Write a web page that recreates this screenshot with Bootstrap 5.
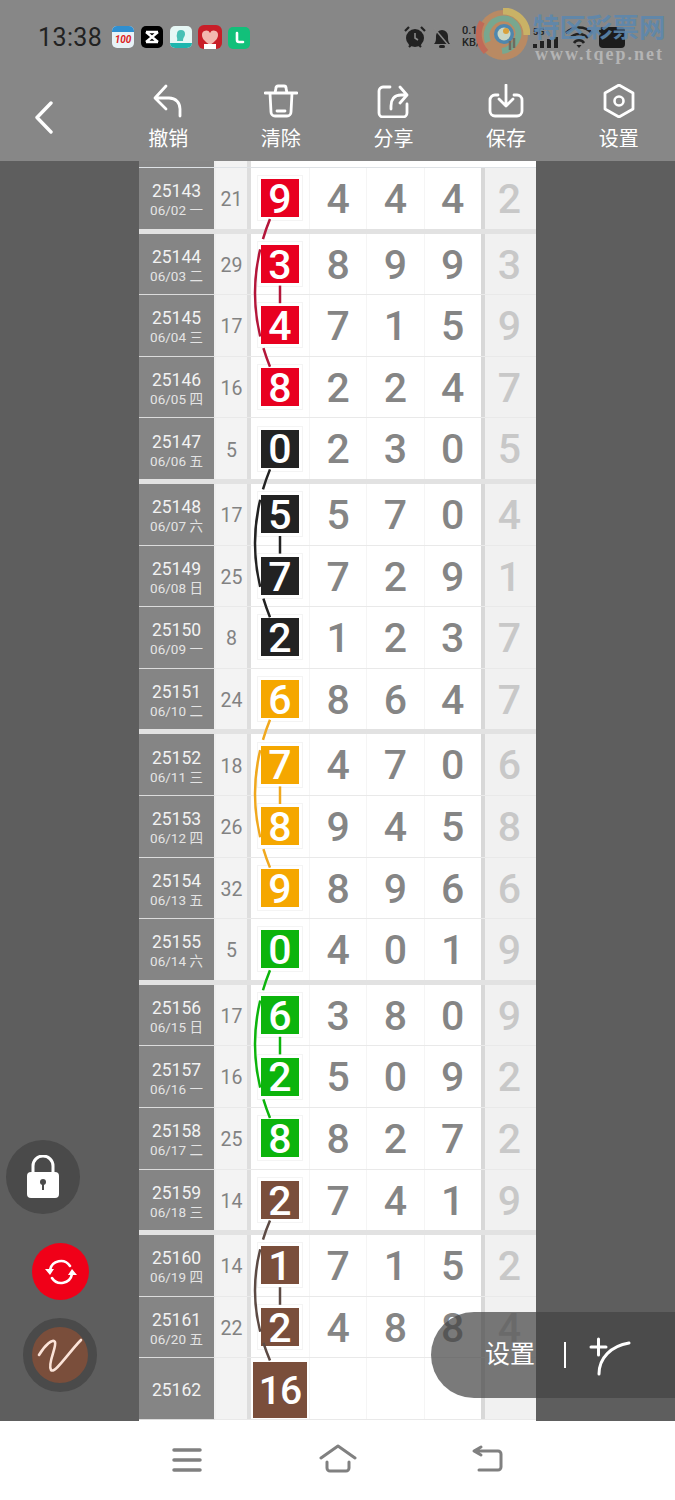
<!DOCTYPE html>
<html lang="zh-CN">
<head>
    <meta charset="UTF-8">
    <meta name="viewport" content="width=device-width, initial-scale=1.0">
    <title>走势图</title>
    <link href="https://cdn.jsdelivr.net/npm/bootstrap@5.3.0/dist/css/bootstrap.min.css" rel="stylesheet">
    <style>
        body {
            width: 675px;
            height: 1500px;
            background-color: #5e5e5e;
            font-family: Roboto, "Noto Sans CJK SC", sans-serif;
        }
        .top-head { height: 161px; background-color: #878787; }
        .status-row { height: 72px; padding: 25px 0 0 38px; }
        .clock { font-size: 25px; line-height: 26px; color: #222; width: 74px; letter-spacing: .4px; }
        .status-right { margin-left: 151px; }
        .speed { font-size: 11px; line-height: 12px; font-weight: 500; color: #222; width: 38px; }
        .tool-back { width: 112px; padding: 29px 0 0 34px; }
        .tool-item { width: 112.75px; color: #fff; font-size: 20px; line-height: 24px; padding-top: 12px; }
        .tool-item svg { margin-bottom: 9px; }

        .chart-wrap { width: 397px; height: 1260px; background-color: #fff; }
        .stub-row { height: 7px; }
        .cell-no { width: 77px; background-color: #858585; color: #f2f2f2; font-size: 17.5px; line-height: 21px; padding-top: 4px; border-right: 2px solid #efefef; }
        .cell-no span { font-size: 13.5px; line-height: 17px; color: #e4e4e4; }
        .cell-sum { width: 35px; background-color: #f3f3f3; color: #828282; font-size: 19.5px; padding-top: 3px; border-right: 4px solid #dedede; }
        .cell-pick { width: 58px; }
        .cell-num { width: 57.3px; color: #858585; font-size: 41px; font-weight: 500; padding-top: 3px; border-left: 1px solid #f5f5f5; }
        .cell-end { width: 55px; background-color: #f1f1f1; color: #c8c8c8; font-size: 41px; font-weight: 500; padding: 3px 2px 0 0; border-left: 4px solid #d8d8d8; }
        .chart-row { height: 61.6px; border-bottom: 1px solid #e9e9e9; }
        .chart-row .cell-no { border-bottom: 1px solid #dcdcdc; margin-bottom: -1px; }
        .chart-row.group-end { height: 65.6px; border-bottom: 5px solid #e2e2e2; }
        .chart-row.group-end .cell-no { border-bottom: 0; margin-bottom: 0; }
        .pick-box {
            position: relative;
            width: 38px;
            height: 38px;
            color: #fff;
            font-size: 41px;
            font-weight: 500;
            padding-top: 3px;
            box-shadow: 0 0 0 3px #fff, 0 0 0 4px #f4f4f4;
        }
        .pick-box.pick-big { width: 54px; height: 56px; box-shadow: none; margin-top: 2px; font-size: 39px; letter-spacing: -1px; padding-top: 4px; }
        .trend-lines { position: absolute; left: 0; top: 0; z-index: 3; }
        .c-red { background-color: #e80020; }
        .c-black { background-color: #222; }
        .c-orange { background-color: #f5a700; }
        .c-green { background-color: #0cb40c; }
        .c-brown { background-color: #7a4e3b; }

        .foot-nav { height: 79px; background-color: #fff; padding-top: 22px; }
        .nav-slot { width: 150.5px; }

        .water-mark { position: absolute; left: 474px; top: 8px; width: 196px; height: 56px; }
        .water-title { position: absolute; left: 59px; top: 3px; color: #5d87ad; font-size: 26.5px; line-height: 34px; font-weight: 700; white-space: nowrap; opacity: .9; }
        .water-url { position: absolute; left: 61px; top: 36px; color: #b4b4b4; font-family: "Liberation Serif", serif; font-size: 18px; line-height: 20px; font-weight: 700; letter-spacing: 2px; white-space: nowrap; }
        .float-lock, .float-sync, .float-pen { position: absolute; border-radius: 50%; }
        .float-lock { left: 6px; top: 1140px; width: 74px; height: 74px; background-color: #4a4a4a; }
        .float-sync { left: 32px; top: 1243px; width: 57px; height: 57px; background-color: #f00018; }
        .float-pen { left: 23px; top: 1318px; width: 74px; height: 74px; background-color: #7a4e3b; border: 9px solid #4a4a4a; }
        .float-setting {
            position: absolute;
            left: 431px;
            top: 1312px;
            width: 244px;
            height: 86px;
            border-radius: 43px 0 0 43px;
            background-color: rgba(68, 68, 68, .71);
            color: #fff;
            font-size: 25px;
            padding-left: 54px;
        }
        .setting-bar { width: 2px; height: 26px; background-color: #fff; margin: 0 23px 0 29px; }
    </style>
</head>
<body class="position-relative overflow-hidden d-flex flex-column">
    <header class="top-head flex-shrink-0">
        <div class="status-row d-flex">
            <div class="clock">13:38</div>
            <svg width="140" height="24" viewBox="0 0 140 24">
                <rect x="0" y="1" width="22" height="22" rx="5" fill="#e8f3f8"/>
                <path d="M0 6a5 5 0 0 1 5-5h12a5 5 0 0 1 5 5v1H0z" fill="#2f8fd0"/>
                <text x="11" y="18" font-size="10" font-weight="700" font-style="italic" fill="#d22" text-anchor="middle">100</text>
                <rect x="29" y="1" width="22" height="22" rx="5" fill="#000"/>
                <path d="M34 7l12 10M46 7L34 17M34 7h12M34 17h12" stroke="#fff" stroke-width="2.4" fill="none"/>
                <rect x="58" y="1" width="22" height="22" rx="5" fill="#e6f7f5"/>
                <path d="M58 18h22v0a5 5 0 0 1-5 5H63a5 5 0 0 1-5-5z" fill="#1db5ad"/>
                <path d="M69 5a4 4 0 0 1 4 4c0 3-2 3-2 7h-6c1-3-1-4 0-7a4 4 0 0 1 4-4z" fill="#49c0b5"/>
                <rect x="86" y="0" width="24" height="24" rx="6" fill="#c81e28"/>
                <path d="M98 20c-6-4-8-7-8-10a4.200 4.200 0 0 1 8-2 4.200 4.200 0 0 1 8 2c0 3-2 6-8 10z" fill="#f3b8b0"/>
                <rect x="92" y="19" width="12" height="5" fill="#fff"/>
                <rect x="116" y="2" width="22" height="22" rx="5" fill="#12c07a"/>
                <path d="M125 8v7a2 2 0 0 0 2 2h4" stroke="#fff" stroke-width="2.600" fill="none" stroke-linecap="round"/>
            </svg>
            <div class="status-right d-flex">
                <svg width="59" height="24" viewBox="0 0 59 24">
                    <circle cx="12" cy="13" r="9" fill="#222"/>
                    <path d="M12 8v5l3 2" stroke="#888" stroke-width="1.600" fill="none"/>
                    <path d="M2 6l4-4M22 6l-4-4M6 22l2-2M18 22l-2-2" stroke="#222" stroke-width="2.200"/>
                    <path d="M31 19c2-2 2-4 2-8a6 6 0 0 1 12 0c0 4 0 6 2 8z" fill="#222"/>
                    <path d="M31 3l16 19" stroke="#888" stroke-width="1.500"/>
                    <rect x="36" y="20" width="6" height="3" rx="1.500" fill="#222"/>
                </svg>
                <div class="speed">0.10<br>KB/s</div>
                <svg width="126" height="26" viewBox="0 0 126 26">
                    <rect x="33" y="19" width="4" height="4" fill="#222"/><rect x="40" y="16" width="4" height="7" fill="#222"/>
                    <rect x="47" y="14" width="4" height="9" fill="#222"/><rect x="54" y="12" width="4" height="11" fill="#222"/>
                    <text x="33" y="10" font-size="9" font-weight="700" fill="#222">5G</text>
                    <path d="M66 8a18 18 0 0 1 26 0M70 13a12 12 0 0 1 18 0M74 18a6 6 0 0 1 10 0" stroke="#222" stroke-width="2.600" fill="none"/>
                    <path d="M79 23l-2.500-3h5z" fill="#222"/>
                    <rect x="99" y="2" width="26" height="21" rx="4" fill="#1c1c1c"/>
                </svg>
            </div>
        </div>
        <div class="d-flex">
            <div class="tool-back">
                <svg width="20" height="34" viewBox="0 0 20 34"><path d="M17 2L3 16.500 17 31" stroke="#fff" stroke-width="3.400" fill="none" stroke-linecap="round" stroke-linejoin="round"/></svg>
            </div>
            <div class="tool-item d-flex flex-column align-items-center">
                <svg width="34" height="34" viewBox="0 0 34 34"><path d="M15 2L4 14l11 11M5 14h13c7 0 11 5 11 11v7" stroke="#fff" stroke-width="2.800" fill="none" stroke-linecap="round" stroke-linejoin="round"/></svg>
                撤销
            </div>
            <div class="tool-item d-flex flex-column align-items-center">
                <svg width="34" height="34" viewBox="0 0 34 34"><path d="M1 9h32M11 9l1-5a2 2 0 0 1 2-2h6a2 2 0 0 1 2 2l1 5M6 9l1 19a4 4 0 0 0 4 4h12a4 4 0 0 0 4-4l1-19M13 27h8" stroke="#fff" stroke-width="2.800" fill="none" stroke-linecap="round" stroke-linejoin="round"/></svg>
                清除
            </div>
            <div class="tool-item d-flex flex-column align-items-center">
                <svg width="34" height="34" viewBox="0 0 34 34"><path d="M14 3H7a4 4 0 0 0-4 4v22a4 4 0 0 0 4 4h20a4 4 0 0 0 4-4v-9M24 3l7 8-7 8M30 11h-5c-7 0-10 5-10 11v3" stroke="#fff" stroke-width="2.800" fill="none" stroke-linecap="round" stroke-linejoin="round"/></svg>
                分享
            </div>
            <div class="tool-item d-flex flex-column align-items-center">
                <svg width="36" height="34" viewBox="0 0 36 34"><path d="M10 11H7a5 5 0 0 0-5 5v11a5 5 0 0 0 5 5h22a5 5 0 0 0 5-5V16a5 5 0 0 0-5-5h-3M18 1v21M11 15l7 7 7-7" stroke="#fff" stroke-width="2.800" fill="none" stroke-linecap="round" stroke-linejoin="round"/></svg>
                保存
            </div>
            <div class="tool-item d-flex flex-column align-items-center">
                <svg width="34" height="34" viewBox="0 0 34 34"><path d="M17 1l14 8v16l-14 8-14-8V9z" stroke="#fff" stroke-width="2.800" fill="none" stroke-linejoin="round"/><circle cx="17" cy="17" r="4.500" stroke="#fff" stroke-width="2.600" fill="none"/></svg>
                设置
            </div>
        </div>
    </header>

    <main class="d-flex justify-content-center flex-shrink-0">
        <div class="chart-wrap position-relative overflow-hidden" id="chart">
            <div class="stub-row d-flex border-bottom">
                <div class="cell-no"></div><div class="cell-sum"></div>
            </div>
        </div>
    </main>

    <footer class="foot-nav d-flex justify-content-center flex-shrink-0">
        <div class="nav-slot text-center">
            <svg width="34" height="30" viewBox="0 0 34 30"><path d="M4 7h26M4 17h26M4 27h26" stroke="#808080" stroke-width="3.500" stroke-linecap="round"/></svg>
        </div>
        <div class="nav-slot text-center">
            <svg width="38" height="30" viewBox="0 0 38 30"><path d="M2 15L19 3l17 12M8 19v6a3 3 0 0 0 3 3h16a3 3 0 0 0 3-3v-6" stroke="#808080" stroke-width="3" fill="none" stroke-linecap="round" stroke-linejoin="round"/></svg>
        </div>
        <div class="nav-slot text-center">
            <svg width="36" height="30" viewBox="0 0 36 30"><path d="M11 4L4 8l7 4M5 8h23a3 3 0 0 1 3 3v13a3 3 0 0 1-3 3H9" stroke="#808080" stroke-width="3" fill="none" stroke-linecap="round" stroke-linejoin="round"/></svg>
        </div>
    </footer>

    <!-- watermark over the status bar -->
    <div class="water-mark">
        <svg class="position-absolute top-0 start-0" width="56" height="56" viewBox="0 0 56 56">
            <circle cx="29" cy="27" r="25" fill="#b98a63"/>
            <path d="M29 3a24 24 0 0 1 24 24" stroke="#c9b266" stroke-width="7" fill="none"/>
            <path d="M8 14a25 25 0 0 0 4 30" stroke="#c06a58" stroke-width="6" fill="none"/>
            <path d="M14 34a17 17 0 0 1 20-23 15 15 0 0 1 10 18c-3 9-9 13-16 14" stroke="#78a78f" stroke-width="6" fill="none"/>
            <circle cx="30" cy="26" r="10" fill="#4f87ad"/>
            <circle cx="30" cy="26" r="6.500" fill="#c9d6c4"/>
            <circle cx="32" cy="23" r="3" fill="#d9a13c"/>
            <path d="M36 33v9M40 30v10" stroke="#6f6a60" stroke-width="2.500" fill="none"/>
        </svg>
        <div class="water-title">特区彩票网</div>
        <div class="water-url">www.tqep.net</div>
    </div>

    <!-- floating buttons -->
    <div class="float-lock d-flex align-items-center justify-content-center">
        <svg width="36" height="44" viewBox="0 0 36 44"><path d="M8 20v-9a10 10 0 0 1 20 0v9" stroke="#fff" stroke-width="3" fill="none"/><rect x="2" y="17" width="32" height="26" rx="4" fill="#fff"/><circle cx="18" cy="27" r="3" fill="#4a4a4a"/><rect x="17" y="28" width="2" height="7" fill="#4a4a4a"/></svg>
    </div>
    <div class="float-sync d-flex align-items-center justify-content-center">
        <svg width="32" height="30" viewBox="0 0 32 30"><path d="M5 13A11 11 0 0 1 25 9M27 17A11 11 0 0 1 7 21" stroke="#fff" stroke-width="2.600" fill="none" stroke-linecap="round"/><path d="M0 12l9 0-4 6zM32 18l-9 0 4-6z" fill="#fff"/></svg>
    </div>
    <div class="float-pen d-flex align-items-center justify-content-center">
        <svg width="46" height="40" viewBox="0 0 46 40"><path d="M2 20C8 10 16 3 18 7c2 5-8 22-4 28 4 4 18-18 30-30" stroke="#fbe3d8" stroke-width="2.600" fill="none" stroke-linecap="round"/></svg>
    </div>
    <div class="float-setting d-flex align-items-center">
        设置<span class="setting-bar"></span>
        <svg width="42" height="42" viewBox="0 0 42 42"><path d="M2 13h15M9.500 5v16M10 40c0-16 12-28 30-31" stroke="#fff" stroke-width="3" fill="none" stroke-linecap="round"/></svg>
    </div>

    <script src="https://cdn.jsdelivr.net/npm/bootstrap@5.3.0/dist/js/bootstrap.bundle.min.js"></script>
    <script>
        // issue, date, sum, picked digit, three digits, last digit, colour, ends group
        const rows = [
            ['25143', '06/02 一', 21, 9, [4, 4, 4], 2, 'red', 1],
            ['25144', '06/03 二', 29, 3, [8, 9, 9], 3, 'red'],
            ['25145', '06/04 三', 17, 4, [7, 1, 5], 9, 'red'],
            ['25146', '06/05 四', 16, 8, [2, 2, 4], 7, 'red'],
            ['25147', '06/06 五', 5, 0, [2, 3, 0], 5, 'black', 1],
            ['25148', '06/07 六', 17, 5, [5, 7, 0], 4, 'black'],
            ['25149', '06/08 日', 25, 7, [7, 2, 9], 1, 'black'],
            ['25150', '06/09 一', 8, 2, [1, 2, 3], 7, 'black'],
            ['25151', '06/10 二', 24, 6, [8, 6, 4], 7, 'orange', 1],
            ['25152', '06/11 三', 18, 7, [4, 7, 0], 6, 'orange'],
            ['25153', '06/12 四', 26, 8, [9, 4, 5], 8, 'orange'],
            ['25154', '06/13 五', 32, 9, [8, 9, 6], 6, 'orange'],
            ['25155', '06/14 六', 5, 0, [4, 0, 1], 9, 'green', 1],
            ['25156', '06/15 日', 17, 6, [3, 8, 0], 9, 'green'],
            ['25157', '06/16 一', 16, 2, [5, 0, 9], 2, 'green'],
            ['25158', '06/17 二', 25, 8, [8, 2, 7], 2, 'green'],
            ['25159', '06/18 三', 14, 2, [7, 4, 1], 9, 'brown', 1],
            ['25160', '06/19 四', 14, 1, [7, 1, 5], 2, 'brown'],
            ['25161', '06/20 五', 22, 2, [4, 8, 8], 4, 'brown'],
        ];
        const center = 'd-flex align-items-center justify-content-center';
        const chart = document.getElementById('chart');
        let html = '';
        rows.forEach(r => {
            html += `<div class="chart-row d-flex${r[7] ? ' group-end' : ''}">
                <div class="cell-no d-flex flex-column align-items-center justify-content-center">${r[0]}<span>${r[1]}</span></div>
                <div class="cell-sum ${center}">${r[2]}</div>
                <div class="cell-pick ${center}"><div class="pick-box c-${r[6]} ${center}">${r[3]}</div></div>
                ${r[4].map(n => `<div class="cell-num ${center}">${n}</div>`).join('')}
                <div class="cell-end ${center}">${r[5]}</div>
            </div>`;
        });
        html += `<div class="chart-row d-flex">
            <div class="cell-no ${center}">25162</div>
            <div class="cell-sum"></div>
            <div class="cell-pick ${center}"><div class="pick-box pick-big c-brown ${center}">16</div></div>
            <div class="cell-num"></div><div class="cell-num"></div><div class="cell-num"></div>
            <div class="cell-end"></div>
        </div>`;
        chart.insertAdjacentHTML('beforeend', html);

        // connecting curves, coordinates are the row centres inside the chart
        const groups = [[0, '#b3163a'], [4, '#222'], [8, '#f0a81e'], [12, '#0cb40c'], [16, '#5c4a44']];
        const centerY = i => 38 + i * 61.6 + 4 * (Math.floor((i + 3) / 4));
        let lines = '';
        groups.forEach(([start, color]) => {
            const top = centerY(start) + 20;
            const bottom = centerY(start + 3) - (start === 16 ? 29 : 21);
            const mid = (top + bottom) / 2;
            lines += `<path d="M131 ${top} Q101 ${mid} 131 ${bottom}" pathLength="100" stroke-dasharray="14 7 58 8 13" stroke="${color}" stroke-width="2.500" fill="none"/>`;
            lines += `<path d="M141 ${centerY(start + 1) + 21} V${centerY(start + 2) - 23}" stroke="${color}" stroke-width="2.500"/>`;
        });
        chart.insertAdjacentHTML('beforeend', `<svg class="trend-lines" width="397" height="1260" viewBox="0 0 397 1260">${lines}</svg>`);
    </script>
</body>
</html>
